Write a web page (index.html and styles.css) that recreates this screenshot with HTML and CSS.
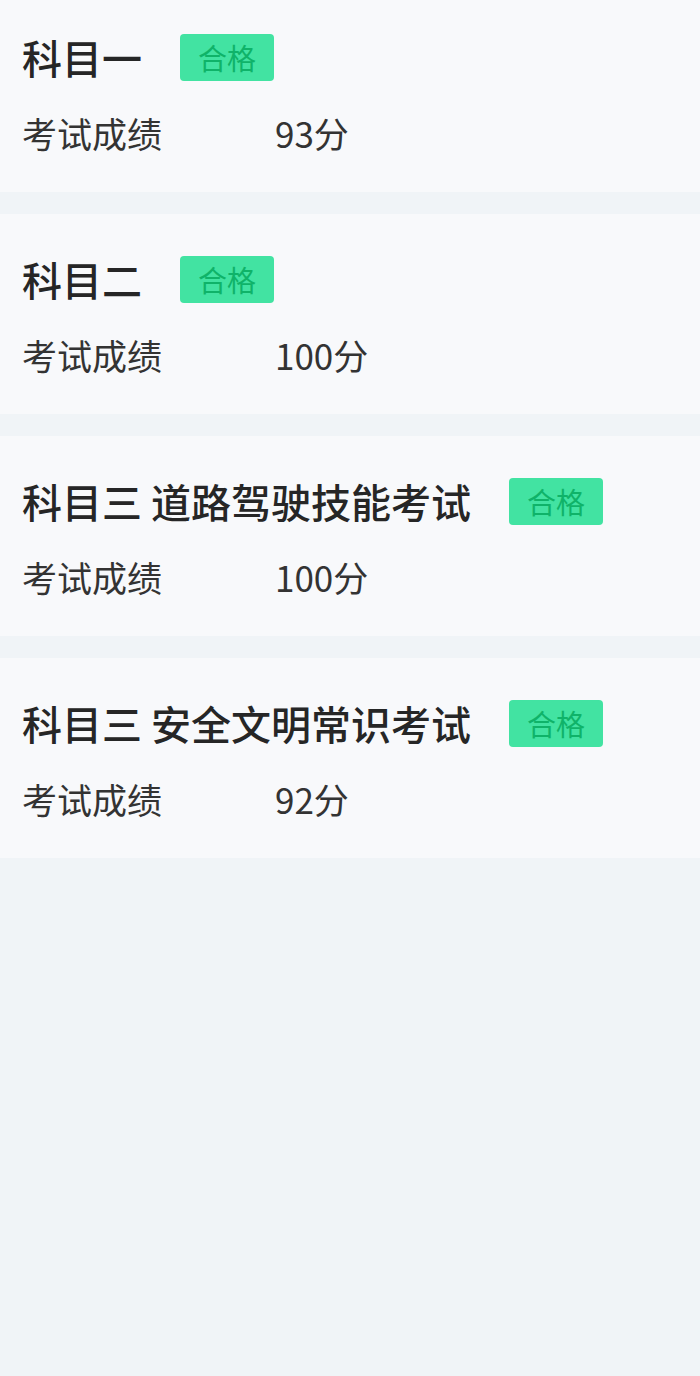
FILE: index.html
```html
<html>
    <head>
        <meta charset="utf-8">
        <link rel="stylesheet" href="styles.css">
    </head>
    <body>
        <div class="list">
            <div class="card">
                <div class="title-row">
                    <span class="title">科目一</span>
                    <span class="badge">合格</span>
                </div>
                <div class="score-row">
                    <span class="label">考试成绩</span>
                    <span class="score">93分</span>
                </div>
            </div>
            <div class="card">
                <div class="title-row">
                    <span class="title">科目二</span>
                    <span class="badge">合格</span>
                </div>
                <div class="score-row">
                    <span class="label">考试成绩</span>
                    <span class="score">100分</span>
                </div>
            </div>
            <div class="card">
                <div class="title-row">
                    <span class="title">科目三 道路驾驶技能考试</span>
                    <span class="badge">合格</span>
                </div>
                <div class="score-row">
                    <span class="label">考试成绩</span>
                    <span class="score">100分</span>
                </div>
            </div>
            <div class="card">
                <div class="title-row">
                    <span class="title">科目三 安全文明常识考试</span>
                    <span class="badge">合格</span>
                </div>
                <div class="score-row">
                    <span class="label">考试成绩</span>
                    <span class="score">92分</span>
                </div>
            </div>
        </div>
    </body>
</html>
```

FILE: styles.css
```css
body {margin: 0; background-color: #f0f4f7; font-family: "Noto Sans CJK SC", "Noto Sans", sans-serif; color: #2b2b2b;}
.list {display: flex; flex-direction: column; gap: 22px;}
.card {background-color: #f8f9fb; padding: 41px 22px 36px 22px; display: flex; flex-direction: column; gap: 27px;}
.card:first-child {padding-top: 33px;}
.title-row {display: flex; align-items: center; height: 48px;}
.title {font-size: 40px; font-weight: 500; color: #262626; line-height: 48px;}
.badge {margin-left: 38px; background-color: #42e3a2; color: #0fb369; font-size: 29px; line-height: 47px; height: 47px; padding: 0 18px; border-radius: 4px;}
.score-row {display: flex; align-items: center; height: 48px;}
.label {width: 253px; font-size: 35px; color: #333;}
.score {font-size: 35px; color: #333;}
```
